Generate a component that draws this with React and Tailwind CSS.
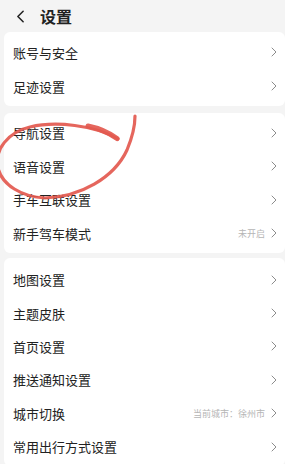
import { ChevronLeft, ChevronRight } from "lucide-react";

const groups = [
  { cls: "mt-0 pt-[3px] pb-[3px]", rows: [{ label: "账号与安全" }, { label: "足迹设置" }], h: "h-[34px]" },
  {
    cls: "mt-[7px] pt-[3px] pb-[3px]",
    h: "h-[33.5px]",
    rows: [
      { label: "导航设置" },
      { label: "语音设置" },
      { label: "手车互联设置" },
      { label: "新手驾车模式", value: "未开启" },
    ],
  },
  {
    cls: "mt-[5px] pt-[5px] pb-[3px]",
    h: "h-[33.4px]",
    rows: [
      { label: "地图设置" },
      { label: "主题皮肤" },
      { label: "首页设置" },
      { label: "推送通知设置" },
      { label: "城市切换", value: "当前城市：徐州市" },
      { label: "常用出行方式设置" },
    ],
  },
];

const Row = ({ label, value, h }) => (
  <div className={`flex items-center justify-between pl-[9px] pr-[3px] ${h}`}>
    <span className="text-[13px] text-[#222] leading-none">{label}</span>
    <div className="flex items-center gap-[1px]">
      {value && <span className="text-[9px] text-[#b5b5b5] leading-none">{value}</span>}
      <ChevronRight size={16} strokeWidth={1.3} className="text-[#7a7a7a]" />
    </div>
  </div>
);

export default function App() {
  return (
    <div
      className="relative w-[285px] h-[464px] overflow-hidden bg-[#f4f4f4]"
      style={{ fontFamily: '"Noto Sans CJK SC", "Noto Sans", sans-serif' }}
    >
      {/* header */}
      <div className="flex items-center h-[32px] pl-[10px]">
        <ChevronLeft size={21} strokeWidth={1.8} className="text-[#222]" />
        <span className="ml-[9px] text-[16px] font-bold text-[#222] leading-none">设置</span>
      </div>

      {groups.map((g, i) => (
        <div key={i} className={`ml-[4px] bg-white rounded-[6px] ${g.cls}`}>
          {g.rows.map((r) => (
            <Row key={r.label} {...r} h={g.h} />
          ))}
        </div>
      ))}

      {/* red hand-drawn mark */}
      <svg className="absolute inset-0 pointer-events-none" width="285" height="464" viewBox="0 0 285 464">
        <path
          d="M118 139 C 95 125, 55 121, 30 127 C 8 132, -6 150, -2 168 C 2 185, 22 197, 45 198 C 80 197, 114 178, 127 150 C 132 138, 135 125, 135 116"
          fill="none"
          stroke="#e3594f"
          strokeOpacity="0.92"
          strokeWidth="3.2"
          strokeLinecap="round"
        />
        <path
          d="M117 138.5 C 108 132, 98 128, 88 126"
          fill="none"
          stroke="#e3594f"
          strokeOpacity="0.92"
          strokeWidth="5"
          strokeLinecap="round"
        />
      </svg>
    </div>
  );
}
